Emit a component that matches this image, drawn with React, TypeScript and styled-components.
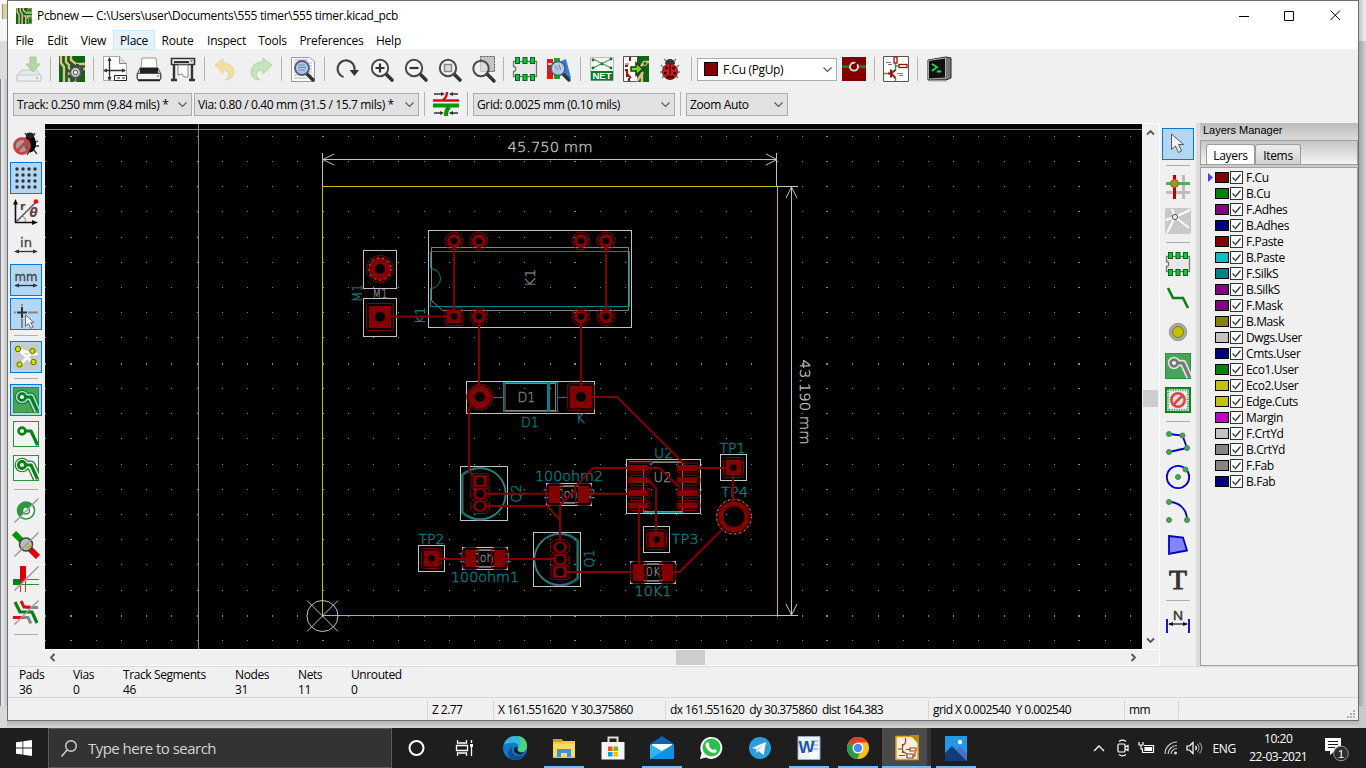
import React from "react";
import styled, { createGlobalStyle } from "styled-components";

const GlobalStyle = createGlobalStyle`
  * { box-sizing: border-box; }
  html, body { margin: 0; padding: 0; overflow: hidden; }
  body { font-family: "Open Sans", "Noto Sans", sans-serif; font-size: 12px; color: #000; }
  svg { display: block; flex: none; overflow: visible; }
`;

/* ---------- shell ---------- */

const Screen = styled.div`
  width: 1366px;
  height: 768px;
  display: flex;
  flex-direction: column;
  overflow: hidden;
`;

const Desktop = styled.div`
  height: 728px;
  display: flex;
  background: linear-gradient(to bottom, #d8d8d8 0, #d8d8d8 720px, #b4b4b4 721px, #d4d4d4 728px);
`;

const BehindLeft = styled.div`
  width: 7px;
  display: flex;
  flex-direction: column;
`;

const BehindRight = styled(BehindLeft)``;

const Slab = styled.div<{ $h: number; $bg: string; $edge?: string }>`
  height: ${(p) => p.$h}px;
  background: ${(p) => p.$bg};
  border-left: ${(p) => (p.$edge ? `1px solid ${p.$edge}` : "none")};
`;

const Window = styled.div`
  width: 1352px;
  height: 721px;
  border: 1px solid #6e6e6e;
  background: #f0f0f0;
  display: flex;
  flex-direction: column;
`;

const TitleBar = styled.div`
  height: 29px;
  flex: none;
  background: #fff;
  display: flex;
  align-items: center;
  padding-left: 8px;
`;

const Title = styled.div`
  margin-left: 5px;
  flex: 1;
  letter-spacing: -0.32px;
`;

const Caption = styled.div`
  width: 45.5px;
  display: flex;
  justify-content: center;
`;

const MenuBar = styled.div`
  height: 19px;
  flex: none;
  background: #fff;
  display: flex;
`;

const MenuItem = styled.div<{ $w: number; $on?: boolean }>`
  width: ${(p) => p.$w}px;
  height: 20px;
  display: flex;
  align-items: center;
  justify-content: center;
  padding-top: 1px;
  letter-spacing: -0.24px;
  border: 1px solid ${(p) => (p.$on ? "#cce8ff" : "transparent")};
  background: ${(p) => (p.$on ? "#e5f3ff" : "transparent")};
`;

const ToolRow = styled.div`
  height: 40px;
  flex: none;
  padding-left: 4px;
  display: flex;
  align-items: center;
`;

const OptionRow = styled(ToolRow)`
  height: 34px;
  padding: 0 0 4px 5px;
`;

const Cell = styled.div<{ $dim?: boolean }>`
  width: 34px;
  display: flex;
  justify-content: center;
  opacity: ${(p) => (p.$dim ? 0.4 : 1)};
`;

const VSep = styled.div<{ $m?: string }>`
  width: 1px;
  height: 24px;
  margin: ${(p) => p.$m || "0 4px"};
  background: #b4b4b4;
`;

const Combo = styled.div<{ $w: number; $white?: boolean; $m?: string }>`
  width: ${(p) => p.$w}px;
  height: 23px;
  margin: ${(p) => p.$m || "0"};
  padding: 0 3px 0 3px;
  border: 1px solid #adadad;
  background: ${(p) => (p.$white ? "#fff" : "#e1e1e1")};
  display: flex;
  align-items: center;
  letter-spacing: -0.37px;
`;

const ComboText = styled.span`
  flex: 1;
  white-space: pre;
`;

const Chip = styled.span<{ $c: string; $m?: string; $w?: number; $h?: number }>`
  width: ${(p) => p.$w || 14}px;
  height: ${(p) => p.$h || 14}px;
  margin: ${(p) => p.$m || "0"};
  border: 1px solid #000;
  background: ${(p) => p.$c};
`;

/* ---------- body ---------- */

const Body = styled.div`
  height: 543px;
  flex: none;
  display: flex;
`;

const SideBar = styled.div<{ $w: number; $pl: number }>`
  width: ${(p) => p.$w}px;
  padding: 4px 0 0 ${(p) => p.$pl}px;
  display: flex;
  flex-direction: column;
`;

const SideBtn = styled.div<{ $on?: boolean }>`
  width: 32px;
  height: 32px;
  margin: 1px 0;
  display: flex;
  align-items: center;
  justify-content: center;
  border: 1px solid ${(p) => (p.$on ? "#0078d7" : "transparent")};
  background: ${(p) => (p.$on ? "#b3d6f3" : "transparent")};
`;

const HSep = styled.div`
  width: 24px;
  height: 1px;
  margin: 4px;
  background: #b0b0b0;
`;

const CanvasArea = styled.div`
  width: 1115px;
  display: flex;
  flex-direction: column;
  border-top: 1px solid #fff;
  border-right: 1px solid #fff;
`;

const CanvasTop = styled.div`
  height: 525px;
  display: flex;
`;

const VScroll = styled.div`
  width: 17px;
  display: flex;
  flex-direction: column;
  align-items: center;
  justify-content: space-between;
  padding: 4px 0 4px;
`;

const HScroll = styled.div`
  height: 17px;
  display: flex;
  align-items: center;
  justify-content: space-between;
  padding: 0 21px 0 3px;
  border-top: 1px solid #fff;
  border-bottom: 1px solid #fff;
`;

const Thumb = styled.div<{ $w: number; $h: number; $m: string }>`
  width: ${(p) => p.$w}px;
  height: ${(p) => p.$h}px;
  margin: ${(p) => p.$m};
  background: #cdcdcd;
`;

const Panel = styled.div`
  width: 162px;
  border-left: 4px solid #dcdcdc;
  display: flex;
  flex-direction: column;
`;

const PanelTitle = styled.div`
  height: 17px;
  padding-left: 3px;
  line-height: 15px;
  font-family: "Liberation Sans", Arial, sans-serif;
  font-size: 11px;
  letter-spacing: 0;
  color: #000;
  background: linear-gradient(to bottom, #bcbcbc, #dadada);
`;

const TabStrip = styled.div`
  height: 28px;
  display: flex;
  align-items: flex-end;
  padding-left: 5px;
  border: 1px solid #a0a0a0;
  background: linear-gradient(to bottom, #c6c6c6, #f4f4f4);
  border-bottom: 4px double #a0a0a0;
`;

const Tab = styled.div<{ $w: number; $on?: boolean }>`
  width: ${(p) => p.$w}px;
  height: 20px;
  display: flex;
  align-items: center;
  justify-content: center;
  padding-top: 1px;
  letter-spacing: -0.3px;
  border: 1px solid #9c9c9c;
  border-bottom: none;
  border-radius: 3px 3px 0 0;
  background: ${(p) => (p.$on ? "#fff" : "linear-gradient(to bottom, #ededed, #d2d2d2)")};
`;

const LayerList = styled.div`
  flex: 1;
  padding-top: 1px;
  border: solid #a0a0a0;
  border-width: 0 1px 1px 1px;
`;

const LayerRow = styled.div`
  height: 16px;
  display: flex;
  align-items: center;
  letter-spacing: -0.38px;
`;

const Marker = styled.span`
  width: 14px;
  padding-left: 7px;
`;

const CheckBox = styled.span`
  width: 13px;
  height: 13px;
  margin: 0 3px 0 1px;
  border: 1px solid #333;
  background: #fff;
`;

/* ---------- bottom bars ---------- */

const MessageBar = styled.div`
  height: 32px;
  flex: none;
  border-top: 1px solid #dadada;
  border-bottom: 1px solid #d7d7d7;
  padding-left: 11px;
  display: flex;
  line-height: 15px;
  letter-spacing: -0.4px;
`;

const Message = styled.div<{ $w: number }>`
  width: ${(p) => p.$w}px;
  white-space: nowrap;
`;

const StatusBar = styled.div`
  flex: 1;
  min-height: 0;
  padding: 2px 0 1px 419px;
  display: flex;
`;

const Field = styled.div<{ $w: number }>`
  width: ${(p) => p.$w}px;
  padding-left: 4px;
  border-left: 1px solid #d7d7d7;
  line-height: 20px;
  white-space: pre;
  letter-spacing: -0.57px;
`;

const Grip = styled.div`
  flex: 1;
  display: flex;
  align-items: flex-end;
  justify-content: flex-end;
  padding-right: 2px;
`;

const TaskBar = styled.div`
  height: 40px;
  background: #1e1e1e;
  display: flex;
  align-items: stretch;
  color: #fff;
`;

const StartCell = styled.div`
  width: 48px;
  display: flex;
  align-items: center;
  justify-content: center;
`;

const Search = styled.div`
  width: 344px;
  border: 1px solid #5a5a5a;
  background: #333;
  display: flex;
  align-items: center;
  padding-left: 11px;
  color: #d4d4d4;
  font-size: 15px;
  letter-spacing: -0.53px;
`;

const SearchText = styled.span`
  margin-left: 9px;
  padding-bottom: 1px;
`;

const TaskButton = styled.div<{ $run?: boolean; $active?: boolean }>`
  width: 49px;
  display: flex;
  flex-direction: column;
  align-items: center;
  justify-content: flex-end;
  background: ${(p) => (p.$active ? "linear-gradient(to right,#4a4a4a 45px,#333 45px)" : "transparent")};
  &::after {
    content: "";
    width: ${(p) => (p.$active ? 49 : 40)}px;
    height: 2px;
    margin-top: 5px;
    background: ${(p) => (p.$run ? "#76b9ed" : "transparent")};
  }
`;

const Tray = styled.div`
  flex: 1;
  display: flex;
  align-items: center;
  padding-left: 113px;
  gap: 8.500px;
  font-size: 12px;
`;

const Lang = styled.span`
  letter-spacing: -0.4px;
  margin-left: 1px;
`;

const Clock = styled.div`
  width: 66px;
  margin-left: 1px;
  text-align: center;
  line-height: 18px;
  letter-spacing: -0.45px;
  white-space: nowrap;
`;

const Notice = styled.div`
  margin-left: 2px;
`;

/* ---------- icons ---------- */

const Ico = ({ children, s = 26 }: { children: React.ReactNode; s?: number }) => (
  <svg width={s} height={s} viewBox="0 0 26 26" fill="none">
    {children}
  </svg>
);

const Handle = () => <path d="M17.500 17.500l6.500 6.500" stroke="#333" strokeWidth="3.600" strokeLinecap="round" />;
const Lens = ({ children }: { children?: React.ReactNode }) => (
  <Ico>
    <Handle />
    <circle cx="12" cy="12" r="8.200" fill="#f4f4f4" stroke="#4a4a4a" strokeWidth="2" />
    {children}
  </Ico>
);

const BoardBg = () => (
  <>
    <rect width="26" height="26" fill="#0d6414" />
    <path d="M2 0v7l3 4v15M7 0v6l3 3v17M12 0v4l5 4h9M12 13h4v13M26 13H19v4" stroke="#e0c08c" strokeWidth="2.400" />
  </>
);

const PcbIcon = ({ s = 26 }: { s?: number }) => (
  <Ico s={s}>
    <BoardBg />
    <path d="M19 1h6v5h-6zM20 16h6v9h-6z" fill="#0a7a14" stroke="#e0c08c" />
  </Ico>
);

const SaveIcon = () => (
  <Ico>
    <path d="M5 14h16l4 6v5H1v-5z" fill="#d6dbdd" stroke="#8b9296" />
    <path d="M1 19h24v6H1z" fill="#e8ecee" stroke="#8b9296" />
    <path d="M14 1h6v7h4l-7 8-7-8h4z" fill="#5cb636" stroke="#2f8b16" />
    <circle cx="21" cy="22" r="1.200" fill="#2b2" />
  </Ico>
);

const SetupIcon = () => (
  <Ico>
    <BoardBg />
    <circle cx="16.500" cy="16.500" r="7" stroke="#444" strokeWidth="3.500" strokeDasharray="2.900 2.600" />
    <circle cx="16.500" cy="16.500" r="5.200" fill="#d4d4d4" stroke="#555" strokeWidth="1.600" />
    <circle cx="16.500" cy="16.500" r="2.200" fill="#fff" stroke="#444" />
  </Ico>
);

const PageIcon = () => (
  <Ico>
    <path d="M1.500 .500h16l7 7v17h-23z" fill="#fff" stroke="#aaa" />
    <path d="M17.500 .500v7h7" fill="#ddd" stroke="#888" />
    <path d="M7.500 2v22M2 14.500h21" stroke="#333" strokeWidth="1.400" />
    <path d="M7.500 1l2 4h-4zM7.500 25l2-4h-4zM1 14.500l4-2v4zM24 14.500l-4-2v4z" fill="#333" />
    <path d="M12.500 19.500h12v5h-12zM15 22h3M20 22h3" fill="#fff" stroke="#222" />
  </Ico>
);

const PrintIcon = () => (
  <Ico>
    <path d="M6 2h14l1 10H5z" fill="#fff" stroke="#999" />
    <path d="M4 12h18l3 6v5H1v-5z" fill="#bcc" stroke="#555" />
    <path d="M4 12h18v5H4z" fill="#222" />
    <path d="M1.500 17.500h23v6h-23z" fill="#f2f2f2" stroke="#555" />
    <path d="M2 24.500h22" stroke="#222" strokeWidth="1.500" />
    <circle cx="22" cy="20" r="1" fill="#2c2" />
  </Ico>
);

const PlotIcon = () => (
  <Ico>
    <path d="M1.500 2.500h23v6h-23z" fill="#eee" stroke="#333" strokeWidth="1.600" />
    <path d="M4 6h15" stroke="#333" strokeWidth="2" />
    <circle cx="21.500" cy="5" r="1.200" fill="#2c2" />
    <path d="M4 9v14M22 9v14M1 24h6M19 24h6" stroke="#333" strokeWidth="2.400" />
    <path d="M8 9h10v12h-4l-2-3-4 1z" fill="#fafafa" stroke="#888" />
  </Ico>
);

const UndoIcon = () => (
  <Ico>
    <path d="M2 9l8-6v4c8 0 13 5 10 13-1 2-4 4-8 4 5-3 5-10-2-10v4z" fill="#f5c524" stroke="#e6b030" />
  </Ico>
);
const RedoIcon = () => (
  <Ico>
    <path d="M25 9l-9-7v4C7 6 2 12 5 20c1 2 4 4 8 4-5-3-5-10 3-10v4z" fill="#7ed86a" stroke="#4db33a" />
  </Ico>
);

const FindIcon = () => (
  <Ico>
    <path d="M1.500 1.500h18l5 4v20h-23z" fill="#fff" stroke="#999" />
    <path d="M4 4h14M4 7h18M4 10h18M4 13h18M4 16h18M4 19h18M4 22h13" stroke="#aaa" />
    <path d="M17 18l6 6" stroke="#333" strokeWidth="3.400" strokeLinecap="round" />
    <circle cx="12" cy="12" r="7" fill="#a9c4e6" fillOpacity=".85" stroke="#4b5c80" strokeWidth="1.800" />
    <path d="M8 9h7M8 11.500h8M8 14h7" stroke="#6d87ad" />
  </Ico>
);

const RefreshIcon = () => (
  <Ico>
    <path d="M9.500 21A8.500 8.500 0 1 1 20.500 14" stroke="#444" strokeWidth="2.200" />
    <path d="M15.500 14h9.500l-4.500 6z" fill="#333" />
  </Ico>
);

const ZoomInIcon = () => (
  <Lens><path d="M12 7.500v9M7.500 12h9" stroke="#333" strokeWidth="2.200" /></Lens>
);
const ZoomOutIcon = () => (
  <Lens><path d="M7.500 12h9" stroke="#333" strokeWidth="2.200" /></Lens>
);
const ZoomFitIcon = () => (
  <Lens><path d="M8.500 8.500h7v7h-7z" fill="#ddd" stroke="#888" strokeWidth="1.500" /></Lens>
);
const ZoomSelIcon = () => (
  <Ico>
    <path d="M10.500 .500h14v15h-14z" fill="#c4c4c4" stroke="#555" strokeDasharray="2 1" />
    <path d="M17 18l7 7" stroke="#333" strokeWidth="3.400" strokeLinecap="round" />
    <circle cx="11" cy="12.500" r="7.700" fill="#eee" fillOpacity=".6" stroke="#4a4a4a" strokeWidth="2" />
  </Ico>
);

const ChipIcon = () => (
  <Ico>
    <path d="M1.500 5.500h23v15h-23v-5c3 0 3-5 0-5z" fill="#e8e8e8" stroke="#777" strokeWidth="1.300" />
    {[3, 10.5, 18].map((x) => (
      <React.Fragment key={x}>
        <rect x={x + 0.5} y="1.500" width="4" height="6" fill="#0c3" stroke="#145a1c" />
        <rect x={x + 0.5} y="18.500" width="4" height="6" fill="#0c3" stroke="#145a1c" />
      </React.Fragment>
    ))}
  </Ico>
);

const LibIcon = () => (
  <Ico>
    <path d="M1 3h6v20H1z" fill="#d81b1b" />
    <path d="M8 2h6v21H8z" fill="#2a9b2f" />
    <path d="M15 5l5-2 5 19-5 2z" fill="#2f7fe0" />
    <path d="M2 8h4M9 8h4" stroke="#fff" strokeWidth="1.500" />
    <path d="M17 18l6 6" stroke="#333" strokeWidth="3.400" strokeLinecap="round" />
    <circle cx="12" cy="12.500" r="7" fill="#b9cdea" fillOpacity=".9" stroke="#4b5c80" strokeWidth="1.600" />
    <path d="M9 10l3 4M13 9l2 5" stroke="#6d87ad" />
  </Ico>
);

const NetIcon = () => (
  <Ico>
    <path d="M1.500 1.500h23v23h-23z" fill="#f4f4f4" stroke="#bbb" />
    <path d="M4 3l18 9M4 12l18-9" stroke="#3c7a4a" />
    {[[4, 4], [22, 3], [22, 12], [4, 12], [13, 8]].map(([x, y]) => (
      <circle key={`${x}-${y}`} cx={x} cy={y} r="1.400" fill="#0b7a26" />
    ))}
    <rect x="2" y="15" width="22" height="9.500" fill="#0b7a26" />
    <text x="13" y="23.200" fontSize="9.500" fontWeight="700" fill="#fff" textAnchor="middle" fontFamily="Liberation Sans">NET</text>
  </Ico>
);

const UpdateIcon = () => (
  <Ico>
    <rect width="26" height="26" fill="#fff" />
    <rect x="14" width="12" height="26" fill="#0d6414" />
    <path d="M14 25l6-9M19 26V17M26 6h-5l-4 6" stroke="#e0c08c" strokeWidth="2.400" />
    <path d="M7 0v5M2 14h2v7M4 18l4 4M2 10h3M6 22v4" stroke="#a01010" strokeWidth="2" />
    <path d="M2 8h4" stroke="#555" />
    <path d="M.500 .500h14M.500 .500v25h13" stroke="#555" />
    <path d="M8 11h5V7l7 6-7 6v-4H8z" fill="#7ed321" stroke="#143c08" strokeWidth="1.500" />
    <circle cx="22" cy="7.500" r="2" fill="#0d6414" stroke="#e0c08c" />
  </Ico>
);

const LadybugIcon = () => (
  <Ico>
    <path d="M7 3l3 3M19 3l-3 3M4 9l3 3M22 9l-3 3M3 16h4M19 16h4M5 22l3-3M21 22l-3-3" stroke="#777" strokeWidth="1.300" />
    <path d="M8 8a5 5 0 0 1 10 0z" fill="#333" />
    <ellipse cx="13" cy="15.500" rx="7.500" ry="8" fill="#cf2020" stroke="#801010" />
    <path d="M13 8v15" stroke="#400" strokeWidth="1.200" />
    {[[9.5, 12], [16.5, 12], [8.5, 17], [17.5, 17], [11, 21], [15.5, 21]].map(([x, y]) => (
      <circle key={`${x}-${y}`} cx={x} cy={y} r="1.500" fill="#200" />
    ))}
  </Ico>
);

const ViaLayerIcon = () => (
  <Ico s={24}>
    <rect width="26" height="26" fill="#840000" />
    <path d="M0 10.500h26" stroke="#0a8a14" strokeWidth="3" />
    <circle cx="13" cy="10.500" r="4.300" fill="#840000" stroke="#ddd" strokeWidth="2" />
    <path d="M12.500 10l6-6" stroke="#840000" strokeWidth="2.600" />
  </Ico>
);

const SchematicIcon = () => (
  <Ico>
    <path d="M.500 .500h25v25H.500z" fill="#fbfbfb" stroke="#555" />
    <path d="M12.500 7v8M1 17.500h6M12.500 10h3M12.500 22v3" stroke="#3a9b3a" strokeWidth="1.400" />
    <rect x="11" y="1" width="3" height="6" fill="#fff" stroke="#a01010" strokeWidth="1.300" />
    <rect x="16" y="8.500" width="8" height="3" fill="#fff" stroke="#a01010" strokeWidth="1.300" />
    <path d="M8 13.500v8M8.500 17l4-3M8.500 18l4 4M5 17.500h3" stroke="#a01010" strokeWidth="2" />
    <path d="M3 6.500h5M5 8.500h4M14 17.500h6M16 19.500h4" stroke="#777" />
  </Ico>
);

const ConsoleIcon = () => (
  <Ico>
    <path d="M2 4l18-3 5 1v20l-5 2H2z" fill="#777" stroke="#222" />
    <path d="M2.500 4.500l17-2.500v20l-17 1z" fill="#111" stroke="#aaa" />
    <path d="M6 8l5 3-5 4M11 15.500h4" stroke="#12e050" strokeWidth="1.800" />
    <path d="M3 25h18" stroke="#aaa" />
  </Ico>
);

const TrackViaIcon = () => (
  <Ico>
    <path d="M14 1c0 4-1 6-4 8" stroke="#d81010" strokeWidth="2.400" />
    <path d="M0 9.500h26" stroke="#e00000" strokeWidth="2.400" />
    <path d="M0 14.500h26" stroke="#009a00" strokeWidth="4" />
    <path d="M17 16c-3 1-4 4-4 9" stroke="#009a00" strokeWidth="4" />
    <path d="M1 3h8M25 3h-8M1 22h8M25 22h-8" stroke="#333" strokeWidth="1.300" />
    <path d="M12 3L8 1v4zM16 3l4-2v4zM11 22l-4-2v4zM16 22l4-2v4z" fill="#333" />
  </Ico>
);

/* left toolbar */
const DrcOffIcon = () => (
  <Ico>
    <path d="M12 2l3 4M22 2l-2 4M25 10l-4 2M26 15h-5M24 23l-4-5M14 24l2-3" stroke="#333" strokeWidth="1.300" />
    <ellipse cx="17" cy="12.500" rx="6" ry="9" fill="#000" />
    <ellipse cx="17" cy="4.500" rx="4" ry="3" fill="#222" />
    <circle cx="9" cy="15" r="7.500" fill="#888" fillOpacity=".75" stroke="#cc4040" strokeWidth="2.800" />
    <path d="M4 20L14 10" stroke="#cc4040" strokeWidth="2.800" />
  </Ico>
);
const GridIcon = () => (
  <Ico>
    {[4, 10, 16, 22].flatMap((x) => [4, 10, 16, 22].map((y) => <circle key={`${x}-${y}`} cx={x} cy={y} r="1.700" fill="#333" />))}
  </Ico>
);
const PolarIcon = () => (
  <Ico>
    <path d="M2.500 3v20.500h19" stroke="#111" strokeWidth="1.600" />
    <path d="M2.500 0l2.500 5.500H0zM25 23.500l-6-2.500v5z" fill="#111" />
    <path d="M3 23L22 4" stroke="#555" strokeWidth="1.500" />
    <path d="M9 17c3 1 4 4 3 6" stroke="#777" />
    <circle cx="23" cy="2.500" r="2.300" fill="#f00" />
    <text x="7" y="10.500" fontSize="11" fontWeight="700" fill="#444" fontFamily="DejaVu Sans">r</text>
    <text x="16.500" y="18" fontSize="12" fontWeight="700" fontStyle="italic" fill="#5c4444" fontFamily="DejaVu Sans">θ</text>
  </Ico>
);
const UnitIcon = ({ t }: { t: string }) => (
  <Ico>
    <text x="13" y="13.500" fontSize="13" textLength={t === "in" ? 12 : 23} lengthAdjust="spacingAndGlyphs" fill="#444" stroke="#444" strokeWidth=".3" textAnchor="middle" fontFamily="DejaVu Sans">{t}</text>
    <path d="M3 18.500h20" stroke="#333" strokeWidth="1.300" />
    <path d="M1 18.500l5-2v4zM25 18.500l-5-2v4z" fill="#333" />
  </Ico>
);
const arrowPath = "M0 0v12l3-3 2.500 5 2.500-1.200L5.500 8H9z";
const CrossIcon = () => (
  <Ico>
    <path d="M1 11.500h2M15 11.500h10M9 18v9M9 3v2" stroke="#888" strokeWidth="2" />
    <path d="M4 11.500h10M9 6v11" stroke="#333" strokeWidth="2" />
    <path d={arrowPath} transform="translate(12.500 14) scale(.95)" fill="#f4f4f4" stroke="#666" />
  </Ico>
);
const RatsIcon = () => (
  <Ico>
    <rect width="26" height="26" rx="2" fill="#c9c9c9" />
    <path d="M5 5l15 14M20 7L7 21M5 5l15 5h5" stroke="#fff" strokeWidth="2.600" />
    {[[5, 5], [19.5, 7], [20.5, 18], [6.5, 20.5]].map(([x, y]) => (
      <circle key={x} cx={x} cy={y} r="2.700" fill="#cde000" stroke="#5f6b00" />
    ))}
  </Ico>
);

const zoneShape = "M9 10h9l6.500 14";
const ZoneIcon = ({ kind, gray }: { kind: "fill" | "none" | "outline"; gray?: boolean }) => {
  const halo = kind === "fill" ? (gray ? "#e4e4e4" : "#a9d4ea") : "#f4f4f4";
  const core = gray ? "#777" : "#0b8018";
  const clip = `zone-${kind}-${gray ? "g" : "c"}`;
  return (
    <Ico>
      <clipPath id={clip}><rect width="26" height="26" /></clipPath>
      <rect x=".5" y=".5" width="25" height="25" fill={kind === "fill" ? "#4aa35a" : "#f2f2f2"} stroke="#2a9140" />
      <g clipPath={`url(#${clip})`}>
        {kind !== "none" && !gray && (
          <>
            <circle cx="9" cy="10" r="7.300" fill="#0b8018" />
            <path d={zoneShape} stroke="#0b8018" strokeWidth="9" strokeLinejoin="round" />
          </>
        )}
        {kind !== "none" && (
          <>
            <circle cx="9" cy="10" r="6.200" fill={halo} />
            <path d={zoneShape} stroke={halo} strokeWidth="6.600" strokeLinejoin="round" />
          </>
        )}
        {kind === "outline" && <circle cx="9" cy="10" r="5" fill="#0b8018" />}
        <path d={zoneShape} stroke={core} strokeWidth="3.200" strokeLinejoin="round" />
        <circle cx="9" cy="10" r="3.400" fill="#f0f0f0" stroke={core} strokeWidth="2.600" />
      </g>
    </Ico>
  );
};
const Slash = () => <path d="M1.500 24.500l24-24" stroke="#999" strokeWidth="1.400" />;
const PadSketchIcon = () => (
  <Ico>
    <circle cx="13" cy="12.500" r="8.500" fill="#fff" stroke="#2a9140" strokeWidth="1.500" />
    <path d="M7 18.500A8.500 8.500 0 0 1 19 6.500z" fill="#2a9b3a" />
    <circle cx="13" cy="12.500" r="3.500" fill="#fff" stroke="#2a9140" strokeWidth="1.500" />
    <Slash />
  </Ico>
);
const ViaSketchIcon = () => (
  <Ico>
    <path d="M1 1l10 10" stroke="#009a00" strokeWidth="6" />
    <path d="M15 15l10 10" stroke="#e00000" strokeWidth="6" />
    <circle cx="13" cy="12.500" r="6.500" fill="#bbb" stroke="#444" strokeWidth="1.500" />
    <path d="M12 17l5-5v4z" fill="#c2b000" />
    <Slash />
  </Ico>
);
const TrackSketchIcon = () => (
  <Ico>
    <rect x="0" y="13" width="9" height="6" fill="#0a8010" />
    <path d="M8 13.500h18M8 18.500h18" stroke="#2a9140" />
    <path d="M7 0h6v13l-6 5z" fill="#d80000" />
    <path d="M7.500 18v8M12.500 14v12" stroke="#e03030" />
    <Slash />
  </Ico>
);
const ContrastIcon = () => (
  <Ico>
    <path d="M13 7.500h12M9 17.500h6l3 6" stroke="#888" strokeWidth="3" />
    <path d="M8 1l3 6h6M0 17.500h10" stroke="#d81010" strokeWidth="3" />
    <path d="M2 2l5 10h12l5 11" stroke="#0b8018" strokeWidth="3.200" />
    <Slash />
  </Ico>
);

/* right toolbar */
const ArrowIcon = () => (
  <Ico><path d="M6.500 3v15.500l4-3.500 3 6.500 3-1.500-3-6.500h5z" fill="#f4f4f4" stroke="#555" /></Ico>
);
const HighlightIcon = () => (
  <Ico>
    <path d="M18.500 1v24M1 18.500h24" stroke="#bdbdbd" strokeWidth="3" />
    <path d="M9.500 1v24" stroke="#c00000" strokeWidth="3" />
    <path d="M1 9.500h24" stroke="#4dae5c" strokeWidth="3" />
    <circle cx="9.500" cy="9.500" r="4" fill="#b08c28" stroke="#8a6a14" />
  </Ico>
);
const LocalRatsIcon = () => (
  <Ico>
    <rect width="26" height="26" rx="2" fill="#c9c9c9" />
    <path d="M10 9L7 1M10 9L1 12M10 9L25 2M10 9L2 25M10 9l14 11" stroke="#fff" strokeWidth="2" />
    <circle cx="10" cy="9" r="2.600" fill="#eee" stroke="#555" />
  </Ico>
);
const RouteIcon = () => (
  <Ico><path d="M3 3l5 10h10l5 10" stroke="#0b8018" strokeWidth="2.600" /></Ico>
);
const ViaIcon = () => (
  <Ico>
    <circle cx="13" cy="13" r="8.700" fill="#a8a8a8" stroke="#999" />
    <circle cx="13" cy="13" r="5.500" fill="#c2c200" stroke="#7a7a20" />
  </Ico>
);
const KeepoutIcon = () => (
  <Ico>
    <rect x="1" y="1" width="24" height="24" fill="#f2f2f2" stroke="#0b8018" strokeWidth="2" />
    <rect x="3" y="3" width="20" height="20" stroke="#4aa35a" strokeWidth="2.600" strokeDasharray="1.200 1.200" />
    <circle cx="13" cy="13" r="6.700" fill="#f6dede" stroke="#d84848" strokeWidth="2.600" />
    <path d="M8.500 17.500l9-9" stroke="#d84848" strokeWidth="2.600" />
  </Ico>
);
const Nodes = ({ pts }: { pts: number[][] }) => (
  <>{pts.map(([x, y]) => <circle key={`${x}-${y}`} cx={x} cy={y} r="2.500" fill="#2fb344" stroke="#5c7a60" />)}</>
);
const PolyIcon = () => (
  <Ico>
    <path d="M4 4l13.500 1.500L22 18 4 22" stroke="#0000c4" strokeWidth="1.800" />
    <Nodes pts={[[4, 4], [17.5, 5.5], [22, 18], [4, 22]]} />
  </Ico>
);
const CircleIcon = () => (
  <Ico>
    <circle cx="13" cy="13" r="11.200" stroke="#0000c4" strokeWidth="1.800" />
    <Nodes pts={[[13, 13], [20.5, 5.5]]} />
  </Ico>
);
const ArcIcon = () => (
  <Ico>
    <path d="M4 4c11 0 18 8 18 18" stroke="#0000c4" strokeWidth="1.800" />
    <Nodes pts={[[4, 4], [4, 22], [22, 22]]} />
  </Ico>
);
const PolygonIcon = () => (
  <Ico><path d="M4 4l14 1.500L22 18.500 4 22z" fill="#8484f4" stroke="#0000c4" strokeWidth="1.800" /></Ico>
);
const TextIcon = () => (
  <Ico>
    <text x="13" y="22.500" fontSize="28" textAnchor="middle" textLength="18" lengthAdjust="spacingAndGlyphs" fill="#333" stroke="#333" strokeWidth=".9" fontFamily="Liberation Serif">T</text>
  </Ico>
);
const DimIcon = () => (
  <Ico>
    <path d="M2 10v14M24 10v14" stroke="#0000c4" strokeWidth="1.800" />
    <path d="M4 15h18" stroke="#222" strokeWidth="1.300" />
    <path d="M3 15l5-2v4zM23 15l-5-2v4z" fill="#111" />
    <text x="13" y="10.500" fontSize="12" textAnchor="middle" textLength="10" lengthAdjust="spacingAndGlyphs" fill="#333" stroke="#333" strokeWidth=".4" fontFamily="Liberation Sans">N</text>
  </Ico>
);

/* ---------- board drawing ---------- */

const CU = "#840000";
const SILK = "#008484";
const CRT = "#c2c2c2";
const FAB = "#848484";
const EDGE = "#c2c200";

type LabelProps = { x: number; y: number; w: number; c: string; children: string; r?: number; h?: number };
/* x, y is the centre of the label; w is its drawn length and h its capital height. */
const Label = ({ x, y, w, c, children, r = 0, h = 10.5 }: LabelProps) => (
  <text
    transform={`translate(${x} ${y}) rotate(${r})`}
    x={-w / 2}
    y={h / 2}
    fontSize={h / 0.73}
    textLength={w}
    lengthAdjust="spacingAndGlyphs"
    fontFamily='"DejaVu Sans Light", "DejaVu Sans", sans-serif'
    fontWeight={200}
    fill={c}
    stroke={c}
    strokeWidth={0.350}
  >
    {children}
  </text>
);

const Box = ({ x, y, x2, y2, c, w = 1 }: { x: number; y: number; x2: number; y2: number; c: string; w?: number }) => (
  <rect x={x} y={y} width={x2 - x} height={y2 - y} stroke={c} strokeWidth={w} fill="none" />
);

const RoundPad = ({ x, y, r = 7, h = 3.3, o = 9 }: { x: number; y: number; r?: number; h?: number; o?: number }) => (
  <g>
    <circle cx={x} cy={y} r={o} stroke={CU} fill="none" />
    <circle cx={x} cy={y} r={r} fill={CU} />
    <circle cx={x} cy={y} r={h} fill="#000" />
  </g>
);

const SquarePad = ({ x, y, r = 7, h = 3.3, o = 9 }: { x: number; y: number; r?: number; h?: number; o?: number }) => (
  <g>
    <rect x={x - o} y={y - o} width={2 * o} height={2 * o} rx={2} stroke={CU} fill="none" />
    <rect x={x - r} y={y - r} width={2 * r} height={2 * r} fill={CU} />
    <circle cx={x} cy={y} r={h} fill="#000" />
  </g>
);

const TestPoint = ({ x, y }: { x: number; y: number }) => (
  <g>
    <Box x={x - 13} y={y - 13} x2={x + 13} y2={y + 13} c={CRT} />
    <rect x={x - 10} y={y - 10} width={20} height={20} rx={3} stroke={CU} fill="none" />
    <rect x={x - 8} y={y - 8} width={16} height={16} rx={1.500} fill={CU} />
    <circle cx={x} cy={y} r={3.200} fill="#000" />
  </g>
);

const Resistor = ({ x, y, name }: { x: number; y: number; name: string }) => (
  <g>
    <Box x={x} y={y} x2={x + 45} y2={y + 22} c={CRT} />
    <Box x={x + 12} y={y + 3} x2={x + 33} y2={y + 19} c={FAB} />
    <path d={`M${x + 16} ${y + 2}h13M${x + 16} ${y + 20}h13`} stroke={SILK} />
    <Label x={x + 22.500} y={y + 10.500} w={name.length > 5 ? 53 : 29} h={8.500} c={FAB}>{name}</Label>
    {[0, 29].map((d) => (
      <g key={d}>
        <rect x={x + 2.500 + d} y={y + 2.500} width={11} height={17} rx={1} fill={CU} />
        <rect x={x + d} y={y} width={16} height={22} rx={3.500} stroke={CU} fill="none" />
      </g>
    ))}
  </g>
);

const Transistor = ({ x, y, flip }: { x: number; y: number; flip?: boolean }) => {
  const s = flip ? -1 : 1;
  return (
    <g transform={`translate(${x} ${y}) scale(${s})`}>
      <path d="M-18 -19A26 26 0 1 1 -18 19z" stroke={SILK} strokeWidth={1.600} fill="none" />
      <path d="M-17 -18A25 25 0 1 1 -17 18z" stroke={FAB} strokeWidth={0.700} fill="none" />
      <rect x={-9} y={-20} width={18} height={14.500} rx={1.500} stroke={CU} fill="none" />
      <rect x={-7} y={-18.500} width={14} height={11.500} fill={CU} />
      <circle cy={-12.500} r={4} fill="#000" />
      {[0, 12.300].map((d) => (
        <g key={d}>
          <path d={`M-5 ${d - 7.5}h10l4.500 4v7l-4.500 4h-10l-4.500 -4v-7z`} stroke={CU} fill="none" />
          <ellipse cy={d} rx={7} ry={6} fill={CU} />
          <circle cy={d} r={4} fill="#000" />
        </g>
      ))}
    </g>
  );
};

const gridX = Array.from({ length: 44 }, (_, i) => i - 1);
const gridY = Array.from({ length: 21 }, (_, i) => i);

const Board = () => (
  <svg width="1097" height="525" viewBox="45 124 1097 525" fill="none">
    <rect x="45" y="124" width="1097" height="525" fill="#000" />
    <g fill={FAB} shapeRendering="crispEdges">
      {gridX.flatMap((i) =>
        gridY.map((j) => (
          <rect
            key={`${i}-${j}`}
            x={Math.floor(71 + i * 25.22) - (i % 10 === 0 ? 1 : 0)}
            y={Math.floor(136.2 + j * 25.22)}
            width={i % 10 === 0 ? 2 : 1}
            height={j === 9 || j === 19 ? 2 : 1}
          />
        )),
      )}
    </g>
    <path d="M45 129.500H1142M198.500 124V649" stroke={FAB} />

    {/* board outline and dimensions */}
    <path d="M322.500 186.500H777.500V615.500H322.500z" stroke={EDGE} />
    <g stroke={CRT}>
      <path d="M322.500 186V153M776.500 186V153M323 159.500H777M334 154l-11 5.500 11 5.500M766 154l11 5.500-11 5.500" />
      <path d="M777 186.500h21M777 615.500h21M791.500 187V615M786 198l5.500-11 5.500 11M786 604l5.500 11 5.500-11" />
      <circle cx="322.500" cy="616" r="15.500" />
      <path d="M307 600.500l31 31M338 600.500l-31 31" />
    </g>
    <Label x={550} y={146.500} w={85} c={CRT}>45.750 mm</Label>
    <Label x={805.500} y={402} w={85} c={CRT} r={90}>43.190 mm</Label>

    {/* K1 relay */}
    <Box x={428.500} y={230.500} x2={631.500} y2={327.500} c={CRT} />
    <path d="M431.500 247.500H628.500V310.500H442.500L431.500 300.500z" stroke={FAB} />
    <path d="M430.500 268.500V251.500H629.500V306.500H430.500V288.500A10 10 0 0 0 430.500 268.500" stroke={SILK} />
    <Label x={530} y={278} w={18} c={FAB} r={-90}>K1</Label>
    <Label x={420} y={315.500} w={17} c={SILK} r={-90}>K1</Label>
    {[454, 479, 581, 606].map((x) => <RoundPad key={x} x={x} y={241} />)}
    {[479, 581, 606].map((x) => <RoundPad key={x} x={x} y={316.500} />)}
    <SquarePad x={454} y={316.500} />

    {/* M1 terminals */}
    <Box x={363.500} y={250.500} x2={396.500} y2={288.500} c={CRT} />
    <Box x={363.500} y={298.500} x2={396.500} y2={336.500} c={CRT} />
    <RoundPad x={380} y={269} r={11.500} h={5} o={13.500} />
    <circle cx="380" cy="269" r="11.200" stroke={CRT} strokeWidth=".8" strokeDasharray="1.500 4" />
    <SquarePad x={380} y={317} r={11} h={5} o={13.500} />
    <Label x={380} y={293} w={15} h={9.500} c={FAB}>M1</Label>
    <Label x={357} y={293} w={18} c={SILK} r={-90}>M1</Label>

    {/* D1 diode */}
    <Box x={466.500} y={381.500} x2={594.500} y2={413.500} c={CRT} />
    <Box x={505} y={383.500} x2={555.500} y2={410.500} c={FAB} />
    <Box x={503.500} y={382.500} x2={557.500} y2={411.500} c={SILK} />
    <path d="M493 397.500h10.500M557.500 397.500H568" stroke={SILK} />
    <path d="M548.500 383v28" stroke={SILK} strokeWidth="3" />
    <RoundPad x={479.700} y={397} r={11.500} h={5} o={13} />
    <SquarePad x={581} y={397} r={11.300} h={5} o={13.300} />
    <Label x={526.500} y={397} w={18} c={FAB}>D1</Label>
    <Label x={530} y={421.500} w={18} c={SILK}>D1</Label>
    <Label x={580.500} y={418} w={9} c={SILK}>K</Label>

    {/* transistors */}
    <Box x={460.500} y={466.500} x2={507.500} y2={520.500} c={CRT} />
    <Transistor x={480} y={493.700} />
    <Label x={516} y={493.500} w={18} c={SILK} r={-90}>Q2</Label>
    <Box x={533.500} y={532.500} x2={580.500} y2={586.500} c={CRT} />
    <Transistor x={560} y={559.500} flip />
    <Label x={589} y={558.500} w={18} c={SILK} r={-90}>Q1</Label>

    {/* resistors */}
    <Resistor x={546.500} y={483.500} name="100ohm2" />
    <Label x={569} y={475.500} w={68} c={SILK}>100ohm2</Label>
    <Resistor x={462.500} y={547.500} name="100ohm1" />
    <Label x={485} y={577} w={68} c={SILK}>100ohm1</Label>
    <Resistor x={630.500} y={561.500} name="10K1" />
    <Label x={653} y={590.500} w={37} c={SILK}>10K1</Label>

    {/* U2 timer */}
    <Box x={626.500} y={459.500} x2={700.500} y2={513.500} c={CRT} />
    <path d="M643.500 466V511.500H682.500V462.500H653L649 465" stroke={FAB} />
    <path d="M629 461.500H683M643 512.500H683" stroke={SILK} />
    <Label x={662.500} y={477} w={18} c={FAB}>U2</Label>
    <Label x={663.500} y={453} w={19} c={SILK}>U2</Label>
    {[468, 480.300, 493, 505.500].flatMap((y) =>
      [629, 678].map((x) => (
        <g key={`${x}-${y}`}>
          <rect x={x} y={y - 3} width={19.500} height={6} fill={CU} />
          <path d={`M${x + 1} ${y - 5}h18l3 3v4l-3 3h-18l-2 -2v-6z`} stroke={CU} />
        </g>
      )),
    )}

    {/* test points */}
    <TestPoint x={733.500} y={467.500} />
    <TestPoint x={656.500} y={539.500} />
    <TestPoint x={431.500} y={558.500} />
    <circle cx="734" cy="516.700" r="17.300" stroke={CU} strokeWidth="1.200" />
    <circle cx="734" cy="516.700" r="17.300" stroke={CRT} strokeDasharray="1.500 3.500" />
    <circle cx="734" cy="516.700" r="13" stroke={CU} strokeWidth="5" />
    <Label x={732.500} y={447.500} w={26} c={SILK}>TP1</Label>
    <Label x={734.500} y={491.500} w={27} c={SILK}>TP4</Label>
    <Label x={685} y={538.500} w={27} c={SILK}>TP3</Label>
    <Label x={431.500} y={538.500} w={26} c={SILK}>TP2</Label>

    {/* copper tracks */}
    <g stroke={CU} strokeWidth="2" strokeLinejoin="round">
      <path d="M454 248V313M606 248V313M391 316.500H448M479 323V389M581 323V391M592 397H617L685.500 465" />
      <path d="M472 404L469 408V471L477 479" />
      <path d="M487 493.700H552M487 506H547L560 520M560 541V505L575 490V487L593 468H630M588 493.700H632" />
      <path d="M647 468H659.500L679 487M648 480L656 488V536M639 506V566M697 468H730M733 471V502M722 529.500L679.500 572H670" />
      <path d="M435 559H466M504 559H553M566 572H635" />
    </g>
  </svg>
);

/* ---------- taskbar icons ---------- */

const TIco = ({ children }: { children?: React.ReactNode }) => (
  <svg width="26" height="26" viewBox="0 0 26 26" fill="none">{children}</svg>
);

const taskApps: { key: string; run?: boolean; active?: boolean; icon: React.ReactNode }[] = [
  { key: "cortana", icon: <TIco><circle cx="12.500" cy="13" r="7" stroke="#fff" strokeWidth="2" /></TIco> },
  {
    key: "tasks",
    icon: <TIco><path d="M4.500 5v3h9V5M4.500 21v-3h9v3M3.500 10.500h11v5h-11zM18.500 5v3M18.500 12v9" stroke="#fff" strokeWidth="1.300" /><path d="M17 9h3v3h-3z" fill="#fff" /></TIco>,
  },
  {
    key: "edge",
    icon: (
      <TIco>
        <circle cx="13" cy="13" r="12" fill="#1479c9" />
        <path d="M2 10C4 3 9 1 14 1c7 0 11 5 11 10 0 4-3 6-6 6-2 0-4-1-3-3 2-4-2-7-6-6-4 0-7 1-8 2z" fill="#35b8d8" />
        <path d="M16 1c6 1 9 5 9 10 0 4-3 6-6 6-2 0-4-1-3-3 3-4 4-9 0-13z" fill="#4fd07a" />
        <path d="M10 12c-1 8 5 11 13 7-3 5-9 7-14 5-4-2-4-9 1-12z" fill="#0b4f94" />
        <path d="M15 12c1 2 0 3 1 4 2 2 5 2 7 1-2 4-11 3-11-2 0-3 2-4 3-3z" fill="#1e1e1e" />
      </TIco>
    ),
  },
  {
    key: "explorer", run: true,
    icon: <TIco><path d="M2 4h8l2 2h12v17H2z" fill="#f9c846" /><path d="M2 4h9v3H2z" fill="#e09a10" /><path d="M2 9h22v12H2z" fill="#ffd866" /><path d="M6 14h14v8h-4v-4h-6v4H6z" fill="#3b94d9" /></TIco>,
  },
  {
    key: "store",
    icon: <TIco><path d="M8.500 8V2.500h9V8" stroke="#ddd" strokeWidth="2" /><path d="M1.500 7h23v17.500h-23z" fill="#f4f4f4" /><path d="M8 11.500h4.500V16H8z" fill="#f25022" /><path d="M13.500 11.500H18V16h-4.500z" fill="#7fba00" /><path d="M8 17h4.500v4.500H8z" fill="#00a4ef" /><path d="M13.500 17H18v4.500h-4.500z" fill="#ffb900" /></TIco>,
  },
  {
    key: "mail", run: true,
    icon: <TIco><path d="M1 9l12-8 12 8v4H1z" fill="#0a64b8" /><path d="M3 9h20v9H3z" fill="#fff" /><path d="M1 9l12 7 12-7v15H1z" fill="#2fb4f0" /><path d="M1 24l24-15v15z" fill="#1490e0" /></TIco>,
  },
  {
    key: "whatsapp",
    icon: <TIco><path d="M2 24l1.600-6A11 11 0 1 1 8 22.500z" fill="#fff" /><circle cx="13.500" cy="12.500" r="9" fill="#2bc04c" /><path d="M9 7.500c2-1 3 2 2 3.500 1 2 2 3 4 4 2-2 4 0 3.500 1.500-2 4-11-1-11-7 0-1 1-2 1.500-2z" fill="#fff" /></TIco>,
  },
  {
    key: "telegram",
    icon: <TIco><circle cx="13" cy="13" r="11" fill="#2a9fdb" /><path d="M5 13l14-6-2.500 13-5-4-2 2v-4z" fill="#fff" /><path d="M9.500 14l7-5-5 6-2 3z" fill="#b5d6ea" /></TIco>,
  },
  {
    key: "word", run: true,
    icon: <TIco><path d="M2 1.500h22v23H2z" fill="#eef3fa" stroke="#9ab" /><path d="M15 6h7M15 10h7M15 14h7M15 18h7" stroke="#7a9ac8" /><text x="10.500" y="18" fontSize="17" fontWeight="700" textAnchor="middle" fill="#1f53a8" fontFamily="Liberation Sans">W</text><path d="M13 17h10l-3 7h-6z" fill="#fff" /></TIco>,
  },
  {
    key: "chrome", run: true,
    icon: <TIco><circle cx="13" cy="13" r="11" fill="#fbc116" /><path d="M13 13L3.500 7.500A11 11 0 0 1 22.500 7.500H13z" fill="#e33b2e" /><path d="M13 13L3.500 7.500A11 11 0 0 0 12 24l5-9z" fill="#2a9b48" /><circle cx="13" cy="13" r="5.500" fill="#fff" /><circle cx="13" cy="13" r="4.200" fill="#4a8af4" /></TIco>,
  },
  {
    key: "kicad", run: true, active: true,
    icon: <TIco><path d="M2 1.500h17l5 6v17H2z" fill="#f4efdf" stroke="#d9a514" strokeWidth="1.500" /><path d="M16 0h9v9z" fill="#b88a08" /><path d="M11.500 3v5M11.500 8l-3 3v5l4 3M4 14h4M8.500 9v9M12 14.500h4M16 13h6v3h-6zM5 20.500h6M13 19h6v4h-6zM21 17v4h-2" stroke="#a8401c" strokeWidth="1.200" /></TIco>,
  },
  {
    key: "photos", run: true,
    icon: <TIco><path d="M2 1h22v25H2z" fill="#2596e8" /><path d="M2 26V18l7-7 15 15z" fill="#123c78" /><path d="M13 15l4-3 7 7v7z" fill="#4a6fc4" /><circle cx="17" cy="7" r="2.200" fill="#fff" /></TIco>,
  },
];

/* ---------- data ---------- */

const layers: [string, string][] = [
  ["F.Cu", "#840000"], ["B.Cu", "#008400"], ["F.Adhes", "#840084"], ["B.Adhes", "#000084"], ["F.Paste", "#840000"],
  ["B.Paste", "#00c2c2"], ["F.SilkS", "#008484"], ["B.SilkS", "#840084"], ["F.Mask", "#840084"], ["B.Mask", "#848400"],
  ["Dwgs.User", "#c2c2c2"], ["Cmts.User", "#000084"], ["Eco1.User", "#008400"], ["Eco2.User", "#c2c200"],
  ["Edge.Cuts", "#c2c200"], ["Margin", "#c200c2"], ["F.CrtYd", "#c2c2c2"], ["B.CrtYd", "#848484"], ["F.Fab", "#848484"],
  ["B.Fab", "#000084"],
];

const menus: [string, number][] = [
  ["File", 33], ["Edit", 33], ["View", 39], ["Place", 42], ["Route", 45], ["Inspect", 53], ["Tools", 39], ["Preferences", 79], ["Help", 35],
];

const messages: [string, string, number][] = [
  ["Pads", "36", 54], ["Vias", "0", 50], ["Track Segments", "46", 112], ["Nodes", "31", 63], ["Nets", "11", 53], ["Unrouted", "0", 80],
];

const Chevron = () => (
  <svg width="11" height="7" viewBox="0 0 11 7" fill="none"><path d="M1.500 1.500l4 4 4-4" stroke="#555" strokeWidth="1.100" /></svg>
);

const ScrollArrow = ({ d }: { d: string }) => (
  <svg width="9" height="9" viewBox="0 0 9 9" fill="none"><path d={d} stroke="#555" strokeWidth="1.800" /></svg>
);

export default function App() {
  return (
    <Screen>
      <GlobalStyle />
      <Desktop>
        <BehindLeft>
          <Slab $h={4} $bg="#f4f4f4" />
          <Slab $h={15} $bg="linear-gradient(to right, #f4f4f4 2px, #b8922a 2px, #b8922a 3px, #d8cfae 3px)" />
          <Slab $h={22} $bg="#f4f4f4" />
          <Slab $h={38} $bg="#dcdcdc" />
          <Slab $h={627} $bg="linear-gradient(to right, #ececec, #c4c4c4)" $edge="#7a7a88" />
          <Slab $h={22} $bg="#d8d8d8" />
        </BehindLeft>
        <Window>
          <TitleBar>
            <PcbIcon s={16} />
            <Title>Pcbnew — C:\Users\user\Documents\555 timer\555 timer.kicad_pcb</Title>
            <Caption><svg width="10" height="10"><path d="M0 5.500h10" stroke="#000" /></svg></Caption>
            <Caption><svg width="11" height="10"><path d="M.5 .5h9v9h-9z" stroke="#000" fill="none" /></svg></Caption>
            <Caption><svg width="11" height="11"><path d="M.5 .5l9.500 9.500M10 .5L.5 10" stroke="#000" /></svg></Caption>
          </TitleBar>
          <MenuBar>
            {menus.map(([name, w]) => (
              <MenuItem key={name} $w={w} $on={name === "Place"}>{name}</MenuItem>
            ))}
          </MenuBar>
          <ToolRow>
            <Cell $dim><SaveIcon /></Cell><VSep />
            <Cell><SetupIcon /></Cell><VSep />
            <Cell><PageIcon /></Cell><Cell><PrintIcon /></Cell><Cell><PlotIcon /></Cell><VSep />
            <Cell $dim><UndoIcon /></Cell><Cell $dim><RedoIcon /></Cell><VSep />
            <Cell><FindIcon /></Cell><VSep $m="0 5px 0 4px" />
            <Cell><RefreshIcon /></Cell><Cell><ZoomInIcon /></Cell><Cell><ZoomOutIcon /></Cell>
            <Cell><ZoomFitIcon /></Cell><Cell><ZoomSelIcon /></Cell><VSep $m="0 4px 0 3px" />
            <Cell><ChipIcon /></Cell><Cell><LibIcon /></Cell><VSep />
            <Cell><NetIcon /></Cell><Cell><UpdateIcon /></Cell><Cell><LadybugIcon /></Cell><VSep />
            <Combo $w={140} $white $m="0 0 0 1px">
              <Chip $c="#840000" $m="0 5px 0 3px" />
              <ComboText>F.Cu (PgUp)</ComboText>
              <Chevron />
            </Combo>
            <Cell><ViaLayerIcon /></Cell><VSep $m="0 4px 0 3px" />
            <Cell><SchematicIcon /></Cell><VSep />
            <Cell><ConsoleIcon /></Cell>
          </ToolRow>
          <OptionRow>
            <Combo $w={179}><ComboText>Track: 0.250 mm (9.84 mils) *</ComboText><Chevron /></Combo>
            <Combo $w={225} $m="0 0 0 2px"><ComboText>Via: 0.80 / 0.40 mm (31.5 / 15.7 mils) *</ComboText><Chevron /></Combo>
            <VSep $m="0 4px 0 5px" />
            <Cell><TrackViaIcon /></Cell>
            <VSep $m="0 5px 0 4px" />
            <Combo $w={202}><ComboText>Grid: 0.0025 mm (0.10 mils)</ComboText><Chevron /></Combo>
            <VSep $m="0 5px" />
            <Combo $w={102}><ComboText>Zoom Auto</ComboText><Chevron /></Combo>
          </OptionRow>
          <Body>
            <SideBar $w={37} $pl={2}>
              <SideBtn><DrcOffIcon /></SideBtn>
              <SideBtn $on><GridIcon /></SideBtn>
              <SideBtn><PolarIcon /></SideBtn>
              <SideBtn><UnitIcon t="in" /></SideBtn>
              <SideBtn $on><UnitIcon t="mm" /></SideBtn>
              <SideBtn $on><CrossIcon /></SideBtn>
              <HSep />
              <SideBtn $on><RatsIcon /></SideBtn>
              <HSep />
              <SideBtn $on><ZoneIcon kind="fill" /></SideBtn>
              <SideBtn><ZoneIcon kind="none" /></SideBtn>
              <SideBtn><ZoneIcon kind="outline" /></SideBtn>
              <HSep />
              <SideBtn><PadSketchIcon /></SideBtn>
              <SideBtn><ViaSketchIcon /></SideBtn>
              <SideBtn><TrackSketchIcon /></SideBtn>
              <SideBtn><ContrastIcon /></SideBtn>
              <HSep />
            </SideBar>
            <CanvasArea>
              <CanvasTop>
                <Board />
                <VScroll>
                  <ScrollArrow d="M1 6.500L4.500 3 8 6.500" />
                  <Thumb $w={15} $h={17} $m="23px 0 0" />
                  <ScrollArrow d="M1 2.500L4.500 6 8 2.500" />
                </VScroll>
              </CanvasTop>
              <HScroll>
                <ScrollArrow d="M6.500 1L3 4.500 6.500 8" />
                <Thumb $w={29} $h={15} $m="0 0 0 195px" />
                <ScrollArrow d="M2.500 1L6 4.500 2.500 8" />
              </HScroll>
            </CanvasArea>
            <SideBar $w={36} $pl={2}>
              <SideBtn $on><ArrowIcon /></SideBtn>
              <HSep />
              <SideBtn><HighlightIcon /></SideBtn>
              <SideBtn><LocalRatsIcon /></SideBtn>
              <HSep />
              <SideBtn><ChipIcon /></SideBtn>
              <SideBtn><RouteIcon /></SideBtn>
              <SideBtn><ViaIcon /></SideBtn>
              <SideBtn><ZoneIcon kind="fill" gray /></SideBtn>
              <SideBtn><KeepoutIcon /></SideBtn>
              <HSep />
              <SideBtn><PolyIcon /></SideBtn>
              <SideBtn><CircleIcon /></SideBtn>
              <SideBtn><ArcIcon /></SideBtn>
              <SideBtn><PolygonIcon /></SideBtn>
              <SideBtn><TextIcon /></SideBtn>
              <HSep />
              <SideBtn><DimIcon /></SideBtn>
            </SideBar>
            <Panel>
              <PanelTitle>Layers Manager</PanelTitle>
              <TabStrip>
                <Tab $w={49} $on>Layers</Tab>
                <Tab $w={46}>Items</Tab>
              </TabStrip>
              <LayerList>
                {layers.map(([name, color], i) => (
                  <LayerRow key={name}>
                    <Marker>
                      {i === 0 && <svg width="5" height="9"><path d="M0 0l5 4.500L0 9z" fill="#4040ff" /></svg>}
                    </Marker>
                    <Chip $c={color} $h={11} />
                    <CheckBox>
                      <svg width="11" height="11" fill="none"><path d="M1.500 5.500l3 3 5-6" stroke="#333" strokeWidth="1.200" /></svg>
                    </CheckBox>
                    {name}
                  </LayerRow>
                ))}
              </LayerList>
            </Panel>
          </Body>
          <MessageBar>
            {messages.map(([name, value, w]) => (
              <Message key={name} $w={w}>{name}<br />{value}</Message>
            ))}
          </MessageBar>
          <StatusBar>
            <Field $w={66}>Z 2.77</Field>
            <Field $w={172}>{"X 161.551620  Y 30.375860"}</Field>
            <Field $w={263}>{"dx 161.551620  dy 30.375860  dist 164.383"}</Field>
            <Field $w={196}>{"grid X 0.002540  Y 0.002540"}</Field>
            <Field $w={54}>mm</Field>
            <Field $w={20}>{""}</Field>
            <Grip>
              <svg width="9" height="9" fill="#b0b0b0"><path d="M6 0h2v2H6zM3 3h2v2H3zM6 3h2v2H6zM0 6h2v2H0zM3 6h2v2H3zM6 6h2v2H6z" /></svg>
            </Grip>
          </StatusBar>
        </Window>
        <BehindRight>
          <Slab $h={41} $bg="linear-gradient(to right, #c4c4c4, #f2f2f2)" />
          <Slab $h={665} $bg="linear-gradient(to right, #a4a4a4, #d2d2d2)" />
          <Slab $h={22} $bg="#c8c8c8" />
        </BehindRight>
      </Desktop>
      <TaskBar>
        <StartCell>
          <svg width="16" height="16" viewBox="0 0 16 16" fill="#fff"><path d="M0 2.300l6.500-.9v6.200H0zM7.300 1.300L16 0v7.600H7.300zM0 8.400h6.500v6.200L0 13.700zM7.300 8.400H16V16l-8.700-1.300z" /></svg>
        </StartCell>
        <Search>
          <svg width="19" height="19" viewBox="0 0 19 19" fill="none" stroke="#d4d4d4" strokeWidth="1.400"><circle cx="11" cy="7" r="5.300" /><path d="M7 11L1.500 17.500" /></svg>
          <SearchText>Type here to search</SearchText>
        </Search>
        {taskApps.map((a) => (
          <TaskButton key={a.key} $run={a.run} $active={a.active}>{a.icon}</TaskButton>
        ))}
        <Tray>
          <svg width="12" height="8" fill="none"><path d="M1 7l5-5 5 5" stroke="#fff" strokeWidth="1.300" /></svg>
          <svg width="16" height="18" viewBox="0 0 16 18" fill="none" stroke="#fff" strokeWidth="1.200"><rect x="4" y="5" width="7" height="8" rx="1" /><path d="M11 8l3-1.500v5L11 10M5 2.500c2-1.500 5-1.500 7 0M5 15.500c2 1.500 5 1.500 7 0" /></svg>
          <svg width="17" height="14" viewBox="0 0 17 14" fill="none" stroke="#fff" strokeWidth="1.200"><path d="M6 4.500h9.500v7H4.500V8" /><path d="M7 6.500h6.500v3H7z" fill="#fff" /><path d="M1 1v3h4V1M3 4v4h2" /></svg>
          <svg width="14" height="14" viewBox="0 0 14 14" fill="none" stroke="#ccc" strokeWidth="1.200"><path d="M1 13A12 12 0 0 1 13 1M4 13a9 9 0 0 1 9-8.500M7 13a6 6 0 0 1 6-5.500" /><circle cx="11.500" cy="12" r="1" fill="#fff" /></svg>
          <svg width="17" height="14" viewBox="0 0 17 14" fill="none" stroke="#fff" strokeWidth="1.200"><path d="M1 5h2.500L7 1.500v11L3.500 9H1z" /><path d="M9.500 5c1 1.200 1 3 0 4" /><path d="M11.500 3c2 2.200 2 6 0 8M13.500 1.500c3 3 3 8 0 11" stroke="#888" /></svg>
          <Lang>ENG</Lang>
          <Clock>10:20<br />22-03-2021</Clock>
          <Notice>
            <svg width="28" height="28" viewBox="0 0 28 28"><path d="M3 4h16v13h-6l-5 4v-4H3z" fill="#fff" /><path d="M6 7.500h10M6 10.500h10M6 13.500h7" stroke="#1e1e1e" /><circle cx="19" cy="19.500" r="7.300" fill="#2e2e2e" stroke="#999" /><text x="19" y="23.500" fontSize="11" textAnchor="middle" fill="#fff" fontFamily="Liberation Sans">1</text></svg>
          </Notice>
        </Tray>
      </TaskBar>
    </Screen>
  );
}
